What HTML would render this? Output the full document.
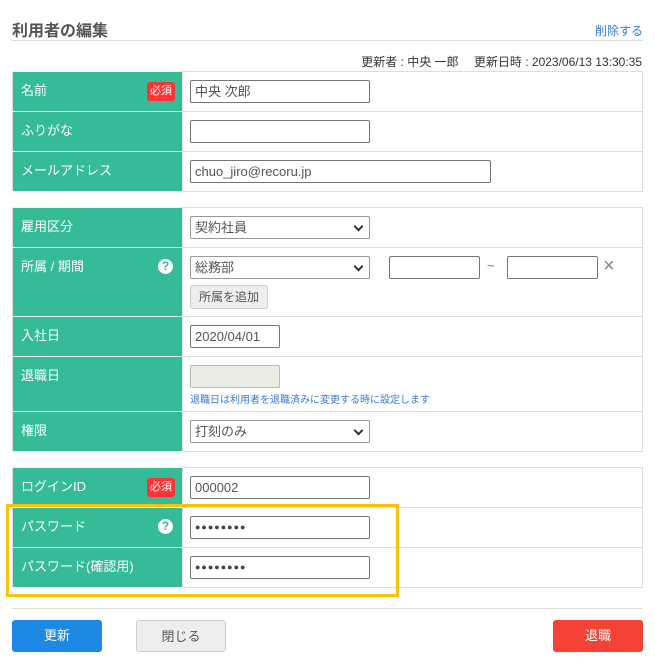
<!DOCTYPE html>
<html><head><meta charset="utf-8"><style>
*{box-sizing:border-box;margin:0;padding:0}
body{width:655px;height:671px;background:#fff;font-family:"Liberation Sans","Noto Sans CJK JP",sans-serif;color:#333;position:relative;overflow:hidden;font-size:13px}
.abs{position:absolute}
.title{left:12px;top:17px;font-size:16px;font-weight:bold;color:#555}
.del{right:12px;top:22px;font-size:12px;color:#3a7bd5}
.hr{left:12px;width:631px;height:1px;background:#ddd}
.meta{right:13px;top:53px;font-size:12px;color:#333}
table{position:absolute;left:12px;width:631px;border-collapse:collapse}
td{border:1px solid #ddd;vertical-align:top;padding:0}
td.l{width:170px;background:#36bb98;color:#fff;font-size:13px;line-height:18px;padding:10px 0 0 8px;position:relative;border-color:#e8f6f1 #ddd}
td.r{padding:8px 0 0 7px;position:relative}
.badge{position:absolute;right:7px;top:10px;background:#f33;color:#fff;font-size:11px;padding:2px 3px;border-radius:3px;line-height:15px}
.q{position:absolute;right:9px;top:11px;width:15px;height:15px;border-radius:50%;background:#fff;color:#36bb98;font-size:12px;font-weight:bold;text-align:center;line-height:15px}
.in{width:180px;height:23px;border:1px solid #777;border-radius:2px;font-size:13px;line-height:21px;padding-left:4px;color:#555;background:#fff}
.sel{border-color:#999;position:relative}
.sel:after{content:"";position:absolute;right:7px;top:6px;width:5px;height:5px;border-right:2px solid #333;border-bottom:2px solid #333;transform:rotate(45deg)}
.pw{font-size:9px;letter-spacing:1px;color:#444}
.btn{position:absolute;top:620px;height:32px;border-radius:3px;font-size:13px;text-align:center;line-height:32px}
</style></head><body>
<div class="abs title">利用者の編集</div>
<div class="abs del">削除する</div>
<div class="abs hr" style="top:40px"></div>
<div class="abs meta">更新者 : 中央 一郎　 更新日時 : 2023/06/13 13:30:35</div>

<table style="top:71px">
<tr style="height:40px"><td class="l">名前<span class="badge">必須</span></td><td class="r"><div class="in">中央 次郎</div></td></tr>
<tr style="height:40px"><td class="l">ふりがな</td><td class="r"><div class="in"></div></td></tr>
<tr style="height:40px"><td class="l">メールアドレス</td><td class="r"><div class="in" style="width:301px">chuo_jiro@recoru.jp</div></td></tr>
</table>

<table style="top:207px">
<tr style="height:40px"><td class="l">雇用区分</td><td class="r"><div class="in sel">契約社員</div></td></tr>
<tr style="height:69px"><td class="l">所属 / 期間<span class="q">?</span></td><td class="r">
<div class="in sel">総務部</div>
<div class="abs in" style="left:206px;top:8px;width:91px"></div>
<div class="abs" style="left:304px;top:10px;color:#777">~</div>
<div class="abs in" style="left:324px;top:8px;width:91px"></div>
<div class="abs" style="left:420px;top:6px;color:#888;font-size:20px;line-height:24px">×</div>
<div style="margin-top:6px;width:78px;height:24px;border:1px solid #ccc;border-radius:3px;background:#eee;font-size:12px;text-align:center;line-height:22px;color:#555">所属を追加</div>
</td></tr>
<tr style="height:40px"><td class="l">入社日</td><td class="r"><div class="in" style="width:90px">2020/04/01</div></td></tr>
<tr style="height:55px"><td class="l">退職日</td><td class="r"><div class="in" style="width:90px;background:#ebebe6;border-color:#bbb"></div><div style="font-size:10px;color:#3a7bd5;margin-top:3px">退職日は利用者を退職済みに変更する時に設定します</div></td></tr>
<tr style="height:40px"><td class="l">権限</td><td class="r"><div class="in sel">打刻のみ</div></td></tr>
</table>

<table style="top:467px">
<tr style="height:40px"><td class="l">ログインID<span class="badge">必須</span></td><td class="r"><div class="in">000002</div></td></tr>
<tr style="height:40px"><td class="l">パスワード<span class="q">?</span></td><td class="r"><div class="in pw">●●●●●●●●</div></td></tr>
<tr style="height:40px"><td class="l">パスワード(確認用)</td><td class="r"><div class="in pw">●●●●●●●●</div></td></tr>
</table>
<div class="abs" style="left:6px;top:504px;width:393px;height:93px;border:3px solid #fbc20a"></div>

<div class="abs hr" style="top:608px"></div>
<div class="btn" style="left:12px;width:90px;background:#1e88e5;color:#fff">更新</div>
<div class="btn" style="left:136px;width:90px;background:#eee;border:1px solid #ccc;color:#555">閉じる</div>
<div class="btn" style="left:553px;width:90px;background:#f44336;color:#fff">退職</div>
</body></html>
